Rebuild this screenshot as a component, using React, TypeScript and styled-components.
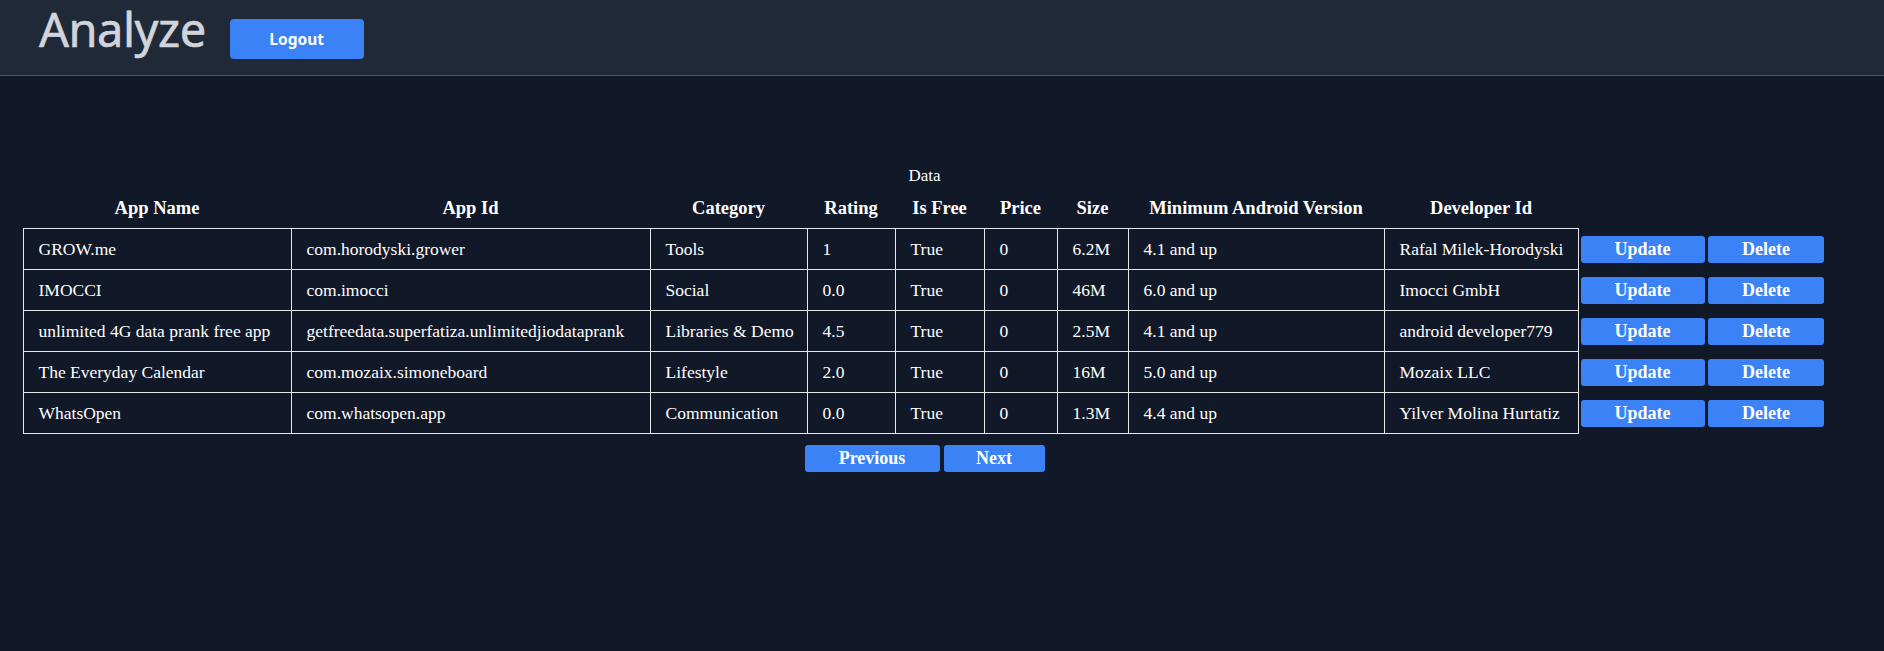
import React from "react";
import styled, { createGlobalStyle } from "styled-components";

const GlobalStyle = createGlobalStyle`
  html, body {
    margin: 0;
    padding: 0;
    background: #111827;
  }
  body {
    font-family: "Liberation Serif", serif;
    color: #ffffff;
    min-height: 651px;
  }
`;

const Page = styled.div`
  min-height: 651px;
  background: #111827;
`;

const Header = styled.header`
  height: 75px;
  background: #1f2937;
  border-bottom: 1px solid #4b5563;
  display: flex;
  align-items: flex-start;
  padding-left: 39px;
  gap: 24px;
  box-sizing: content-box;
`;

const Title = styled.h1`
  margin: 6px 0 0 0;
  font-family: "Noto Sans", "Open Sans", sans-serif;
  font-weight: 400;
  font-size: 47px;
  line-height: 1;
  color: #d1d5db;
  letter-spacing: -0.5px;
  -webkit-text-stroke: 0.6px #d1d5db;
`;

const HeaderButton = styled.button`
  margin-top: 19px;
  width: 134px;
  height: 40px;
  border: none;
  border-radius: 4px;
  background: #3b82f6;
  color: #ffffff;
  font-family: "Noto Sans", "Open Sans", sans-serif;
  font-weight: 700;
  font-size: 15.5px;
  cursor: pointer;
`;

const Main = styled.main`
  padding: 88px 0 0 23px;
  display: flex;
  flex-direction: column;
  align-items: flex-start;
`;

const Section = styled.div`
  width: 1803px;
  display: flex;
  flex-direction: column;
  align-items: center;
`;

const Table = styled.table`
  width: 1803px;
  table-layout: fixed;
  border-collapse: collapse;
  font-family: "Liberation Serif", serif;
  font-size: 17.5px;
  color: #ffffff;
`;

const Caption = styled.caption`
  height: 24px;
  line-height: 24px;
  font-size: 17px;
  text-align: center;
`;

const Th = styled.th`
  height: 40px;
  padding: 0;
  font-weight: 700;
  font-size: 18.5px;
  text-align: center;
  vertical-align: middle;
  white-space: nowrap;
`;

const Td = styled.td`
  height: 40px;
  padding: 0 0 0 15px;
  border: 1px solid #e5e7eb;
  text-align: left;
  vertical-align: middle;
  white-space: nowrap;
  overflow: hidden;
`;

const ActionTd = styled.td`
  padding: 0 2px;
  border: none;
  vertical-align: middle;
`;

const ActionButton = styled.button<{ $w: number }>`
  display: block;
  width: ${(p) => p.$w}px;
  height: 27px;
  border: none;
  border-radius: 3px;
  background: #3b82f6;
  color: #ffffff;
  font-family: "Liberation Serif", serif;
  font-weight: 700;
  font-size: 18px;
  line-height: 27px;
  padding: 0;
  cursor: pointer;
`;

const Pager = styled.div`
  display: flex;
  gap: 4px;
  margin-top: 11px;
`;

const cols = [268, 359, 157, 88, 89, 73, 71, 256, 194, 128, 120];

const headers = [
  "App Name",
  "App Id",
  "Category",
  "Rating",
  "Is Free",
  "Price",
  "Size",
  "Minimum Android Version",
  "Developer Id",
];

const rows = [
  ["GROW.me", "com.horodyski.grower", "Tools", "1", "True", "0", "6.2M", "4.1 and up", "Rafal Milek-Horodyski"],
  ["IMOCCI", "com.imocci", "Social", "0.0", "True", "0", "46M", "6.0 and up", "Imocci GmbH"],
  ["unlimited 4G data prank free app", "getfreedata.superfatiza.unlimitedjiodataprank", "Libraries & Demo", "4.5", "True", "0", "2.5M", "4.1 and up", "android developer779"],
  ["The Everyday Calendar", "com.mozaix.simoneboard", "Lifestyle", "2.0", "True", "0", "16M", "5.0 and up", "Mozaix LLC"],
  ["WhatsOpen", "com.whatsopen.app", "Communication", "0.0", "True", "0", "1.3M", "4.4 and up", "Yilver Molina Hurtatiz"],
];

export default function App() {
  return (
    <Page>
      <GlobalStyle />
      <Header>
        <Title>Analyze</Title>
        <HeaderButton>Logout</HeaderButton>
      </Header>
      <Main>
        <Section>
          <Table>
            <Caption>Data</Caption>
            <colgroup>
              {cols.map((w, i) => (
                <col key={i} style={{ width: w }} />
              ))}
            </colgroup>
            <thead>
              <tr>
                {headers.map((h) => (
                  <Th key={h}>{h}</Th>
                ))}
                <Th />
                <Th />
              </tr>
            </thead>
            <tbody>
              {rows.map((r) => (
                <tr key={r[1]}>
                  {r.map((c, i) => (
                    <Td key={i}>{c}</Td>
                  ))}
                  <ActionTd>
                    <ActionButton $w={124}>Update</ActionButton>
                  </ActionTd>
                  <ActionTd>
                    <ActionButton $w={116}>Delete</ActionButton>
                  </ActionTd>
                </tr>
              ))}
            </tbody>
          </Table>
          <Pager>
            <ActionButton $w={135}>Previous</ActionButton>
            <ActionButton $w={101}>Next</ActionButton>
          </Pager>
        </Section>
      </Main>
    </Page>
  );
}
